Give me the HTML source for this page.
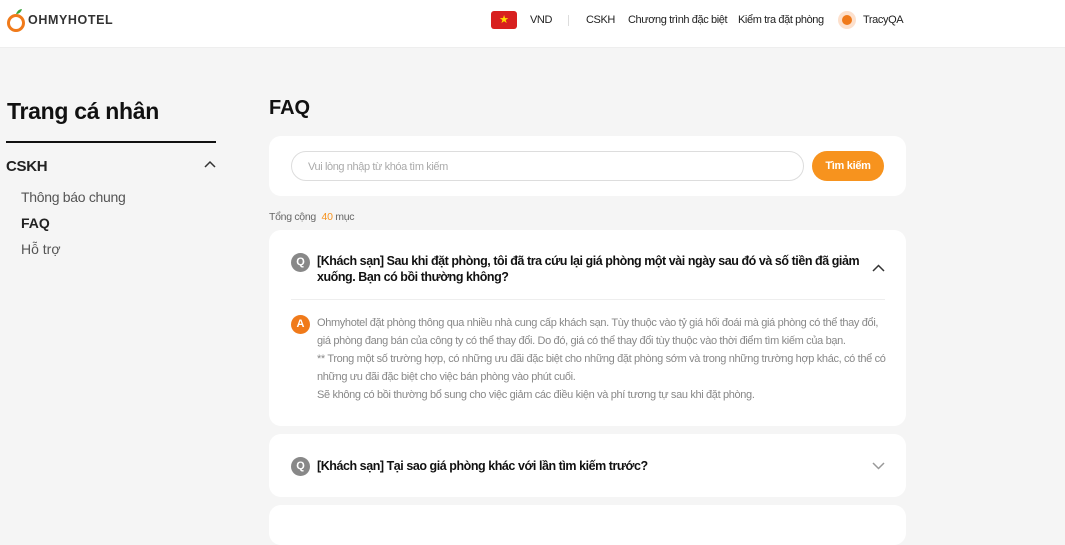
<!DOCTYPE html>
<html><head><meta charset="utf-8"><style>
*{box-sizing:border-box;margin:0;padding:0}
body{width:1065px;height:520px;overflow:hidden;background:#f5f5f5;font-family:"Liberation Sans",Arial,sans-serif;color:#222;position:relative}
.hdr{position:absolute;left:0;top:0;width:1065px;height:48px;background:#fff;border-bottom:1px solid #eee}
.a{position:absolute;white-space:nowrap}
.nav{font-size:11px;color:#222;top:14px;letter-spacing:-0.4px}
.card{position:absolute;left:269px;width:637px;background:#fff;border-radius:12px}
.q{position:absolute;width:19px;height:19px;border-radius:50%;color:#fff;font-size:11px;font-weight:bold;text-align:center;line-height:19px}
.qt{position:absolute;left:317px;font-size:12.5px;font-weight:bold;line-height:16px;color:#111;letter-spacing:-0.45px}
</style></head><body>
<div class="hdr"></div>
<svg class="a" style="left:6px;top:8px" width="22" height="25" viewBox="0 0 22 25"><path d="M10 6 Q12 1 16 1 Q15 5 11 6Z" fill="#3aa53a"/><circle cx="10" cy="15" r="7.5" fill="none" stroke="#f07a1a" stroke-width="3"/></svg>
<div class="a" style="left:28px;top:13px;font-size:12.5px;font-weight:bold;color:#333;letter-spacing:0.6px">OHMYHOTEL</div>
<div class="a" style="left:491px;top:11px;width:26px;height:18px;background:#d8201f;border-radius:3px;color:#ffdd00;font-size:11px;text-align:center;line-height:18px">★</div>
<div class="a nav" style="left:530px">VND</div>
<div class="a" style="left:568px;top:15px;width:1px;height:11px;background:#ddd"></div>
<div class="a nav" style="left:586px">CSKH</div>
<div class="a nav" style="left:628px">Chương trình đặc biệt</div>
<div class="a nav" style="left:738px">Kiểm tra đặt phòng</div>
<div class="a" style="left:838px;top:11px;width:18px;height:18px;border-radius:50%;background:#fde0cc"><div style="margin:4px;width:10px;height:10px;border-radius:50%;background:#f07a1a"></div></div>
<div class="a nav" style="left:863px">TracyQA</div>

<div class="a" style="left:7px;top:98px;font-size:23px;font-weight:bold;color:#111;letter-spacing:-0.3px">Trang cá nhân</div>
<div class="a" style="left:6px;top:141px;width:210px;height:2px;background:#111"></div>
<div class="a" style="left:6px;top:158px;font-size:15px;font-weight:bold;letter-spacing:-0.3px">CSKH</div>
<svg class="a" style="left:204px;top:160px" width="12" height="8"><path d="M1 7 L6 2 L11 7" stroke="#333" stroke-width="1.5" fill="none"/></svg>
<div class="a" style="left:21px;top:189px;font-size:14px;color:#555;letter-spacing:-0.3px">Thông báo chung</div>
<div class="a" style="left:21px;top:215px;font-size:14px;font-weight:bold;color:#222">FAQ</div>
<div class="a" style="left:21px;top:241px;font-size:14px;color:#555">Hỗ trợ</div>

<div class="a" style="left:269px;top:97px;font-size:20px;font-weight:bold;color:#111">FAQ</div>
<div class="card" style="top:136px;height:60px"></div>
<div class="a" style="left:291px;top:151px;width:513px;height:30px;border:1px solid #ddd;border-radius:15px;font-size:11px;color:#aaa;padding:9px 0 0 16px;letter-spacing:-0.4px">Vui lòng nhập từ khóa tìm kiếm</div>
<div class="a" style="left:812px;top:151px;width:72px;height:30px;background:#f7931e;border-radius:15px;color:#fff;font-size:11px;font-weight:bold;text-align:center;line-height:30px;letter-spacing:-0.3px">Tìm kiếm</div>
<div class="a" style="left:269px;top:211px;font-size:10.5px;color:#666;letter-spacing:-0.3px">Tổng cộng <span style="color:#f7931e;margin-left:3px">40</span> mục</div>

<div class="card" style="top:230px;height:196px"></div>
<div class="q" style="left:291px;top:253px;background:#888">Q</div>
<div class="qt" style="top:253px">[Khách sạn] Sau khi đặt phòng, tôi đã tra cứu lại giá phòng một vài ngày sau đó và số tiền đã giảm<br>xuống. Bạn có bồi thường không?</div>
<svg class="a" style="left:872px;top:264px" width="13" height="8"><path d="M1 7 L6.5 1.5 L12 7" stroke="#333" stroke-width="1.5" fill="none"/></svg>
<div class="a" style="left:291px;top:299px;width:594px;height:1px;background:#eee"></div>
<div class="q" style="left:291px;top:315px;background:#f07a1a">A</div>
<div class="a" style="left:317px;top:314px;font-size:11px;line-height:18px;color:#888;letter-spacing:-0.35px">Ohmyhotel đặt phòng thông qua nhiều nhà cung cấp khách sạn. Tùy thuộc vào tỷ giá hối đoái mà giá phòng có thể thay đổi,<br>giá phòng đang bán của công ty có thể thay đổi. Do đó, giá có thể thay đổi tùy thuộc vào thời điểm tìm kiếm của bạn.<br>** Trong một số trường hợp, có những ưu đãi đặc biệt cho những đặt phòng sớm và trong những trường hợp khác, có thể có<br>những ưu đãi đặc biệt cho việc bán phòng vào phút cuối.<br>Sẽ không có bồi thường bổ sung cho việc giảm các điều kiện và phí tương tự sau khi đặt phòng.</div>

<div class="card" style="top:434px;height:63px"></div>
<div class="q" style="left:291px;top:457px;background:#888">Q</div>
<div class="qt" style="top:458px">[Khách sạn] Tại sao giá phòng khác với lần tìm kiếm trước?</div>
<svg class="a" style="left:872px;top:462px" width="13" height="8"><path d="M1 1 L6.5 6.5 L12 1" stroke="#999" stroke-width="1.5" fill="none"/></svg>
<div class="card" style="top:505px;height:40px"></div>
</body></html>
